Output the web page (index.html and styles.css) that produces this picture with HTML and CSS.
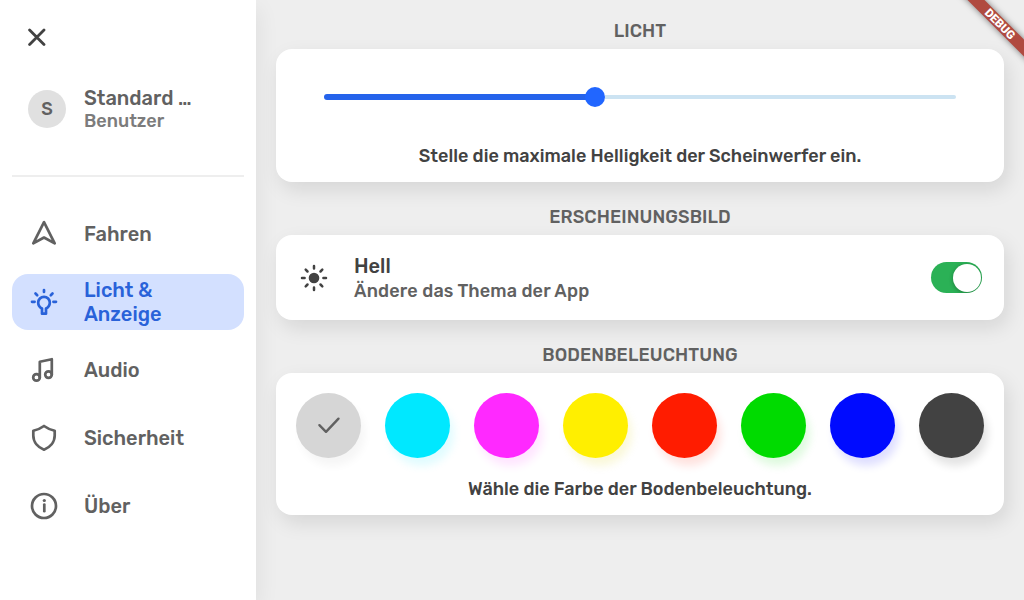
FILE: index.html
```html
<!DOCTYPE html>
<html lang="de">
<head>
<meta charset="utf-8">
<title>Licht &amp; Anzeige</title>
<link rel="stylesheet" href="styles.css">
</head>
<body>
<div class="app">
  <aside class="sidebar">
    <button class="close" aria-label="Schließen">
      <svg width="18" height="18" viewBox="0 0 18 18"><path d="M1.600 2 16 16.400M16 2 1.600 16.400"/></svg>
    </button>
    <div class="profile">
      <span class="avatar">S</span>
      <div>
        <div class="name">Standard …</div>
        <div class="role">Benutzer</div>
      </div>
    </div>
    <hr class="divider">
    <nav class="menu">
      <a class="item">
        <svg class="icon" viewBox="0 0 32 32"><path d="M16 4.200 5.300 25.400 16 19.500l10.700 5.900Z"/></svg>
        <span>Fahren</span>
      </a>
      <a class="item active">
        <svg class="icon" viewBox="0 0 32 32"><path d="M14 27.700v-5.200C11.700 21.500 10.200 19.200 10.200 16.600a5.800 5.800 0 0 1 11.600 0c0 2.600-1.500 4.900-3.800 5.900v5.200ZM16 4v2M7.500 7.500l1.700 1.700M24.500 7.500l-1.700 1.700M4 15.800h2.600M25.400 15.800H28"/></svg>
        <span>Licht &amp;<br>Anzeige</span>
      </a>
      <a class="item">
        <svg class="icon" viewBox="0 0 32 32"><circle cx="8.500" cy="23.400" r="3.300"/><circle cx="20.500" cy="20.600" r="3.300"/><path d="M11.800 23.400V7.700l12-2.500v15.400"/></svg>
        <span>Audio</span>
      </a>
      <a class="item">
        <svg class="icon" viewBox="0 0 32 32"><path d="M16 4C12.700 6.400 9.200 7.900 5.300 8.800v4.800c0 6.500 4.500 11.800 10.700 14.100 6.200-2.300 10.700-7.600 10.700-14.100V8.800C22.800 7.900 19.300 6.400 16 4Z"/></svg>
        <span>Sicherheit</span>
      </a>
      <a class="item">
        <svg class="icon" viewBox="0 0 32 32"><circle cx="16" cy="16" r="12"/><path d="M16.300 14.600v6.600"/><circle class="dot" cx="16.300" cy="10.500" r="1.600"/></svg>
        <span>Über</span>
      </a>
    </nav>
  </aside>
  <main class="content">
    <h2 class="heading">LICHT</h2>
    <section class="card light">
      <div class="slider"><div class="fill"></div><div class="thumb"></div><div class="rest"></div></div>
      <p class="note">Stelle die maximale Helligkeit der Scheinwerfer ein.</p>
    </section>
    <h2 class="heading">ERSCHEINUNGSBILD</h2>
    <section class="card theme">
      <svg class="sun" viewBox="0 0 32 32"><circle cx="16" cy="16" r="5.300"/><path d="M16 4v2.600M16 25.400v2.600M4 16h2.600M25.400 16H28M7.700 7.700l1.800 1.800M22.500 22.500l1.800 1.800M7.700 24.300l1.800-1.800M22.500 9.500l1.800-1.800"/></svg>
      <div class="theme-text">
        <div class="theme-title">Hell</div>
        <div class="theme-sub">Ändere das Thema der App</div>
      </div>
      <span class="switch"><span class="knob"></span></span>
    </section>
    <h2 class="heading">BODENBELEUCHTUNG</h2>
    <section class="card ground">
      <div class="swatches">
        <span class="swatch white"><svg width="24" height="20" viewBox="0 0 24 20"><path d="M2.400 9.200 9 15.800 21.500 2.700"/></svg></span>
        <span class="swatch cyan"></span>
        <span class="swatch magenta"></span>
        <span class="swatch yellow"></span>
        <span class="swatch red"></span>
        <span class="swatch green"></span>
        <span class="swatch blue"></span>
        <span class="swatch dark"></span>
      </div>
      <p class="note">Wähle die Farbe der Bodenbeleuchtung.</p>
    </section>
  </main>
  <div class="ribbon"><span>DEBUG</span></div>
</div>
</body>
</html>
```
FILE: styles.css
```css
* { box-sizing: border-box; }
body { margin: 0; font-family: Rubik, Roboto, "Liberation Sans", sans-serif; font-weight: 500; color: #424242; }
.app { position: relative; display: flex; width: 1024px; height: 600px; overflow: hidden; background: #eee; }

.sidebar { width: 256px; height: 600px; padding: 28px 12px 0; background: #fff; box-shadow: 4px 8px 20px rgba(0, 0, 0, .06); }
.close { display: block; width: 18px; height: 18px; margin-left: 16px; padding: 0; border: 0; background: none; }
.close svg { display: block; fill: none; stroke: #424242; stroke-width: 2.800; stroke-linecap: round; }
.profile { display: flex; align-items: center; gap: 18px; height: 46px; margin: 40px 0 0 16px; }
.avatar { display: flex; align-items: center; justify-content: center; width: 38px; height: 38px; border-radius: 50%; background: #e0e0e0; color: #616161; font-size: 18px; }
.name { font-size: 20px; line-height: 24px; color: #616161; }
.role { font-size: 18px; line-height: 22px; color: #7c7c7c; }
.divider { height: 2px; margin: 43px 0 29px; border: 0; background: #eee; }
.menu { display: flex; flex-direction: column; gap: 12px; }
.item { display: flex; align-items: center; gap: 24px; height: 56px; padding-left: 16px; border-radius: 16px; font-size: 20px; line-height: 24px; color: #616161; }
.item.active { background: #d3e0ff; color: #2962d9; }
.icon, .sun { flex: none; width: 32px; height: 32px; }
.icon { fill: none; stroke: currentColor; stroke-width: 2.700; stroke-linecap: round; stroke-linejoin: round; }
.icon .dot { fill: currentColor; stroke: none; }

.content { flex: 1; padding: 20px 20px 0; }
.heading { height: 29px; margin: 0; font-size: 18px; font-weight: 500; line-height: 22px; letter-spacing: .1px; text-align: center; color: #616161; }
.card { border-radius: 16px; background: #fff; box-shadow: 4px 8px 20px rgba(0, 0, 0, .1); }
.card + .heading { margin-top: 24px; }
.note { margin: 0; font-size: 18px; line-height: 22px; letter-spacing: .03px; text-align: center; }
.light { height: 133px; padding: 38px 48px 0; }
.slider { display: flex; align-items: center; height: 20px; margin-bottom: 38px; }
.fill { width: 262px; height: 6px; margin-right: -1px; border-radius: 3px 0 0 3px; background: #2563eb; }
.thumb { width: 20px; height: 20px; border-radius: 50%; background: #2166ff; }
.rest { flex: 1; height: 4px; border-radius: 0 2px 2px 0; background: #cce3f2; }
.theme { display: flex; align-items: center; height: 85px; padding: 0 22px; }
.sun { fill: #424242; stroke: #424242; stroke-width: 2.500; stroke-linecap: round; }
.sun circle { stroke: none; }
.theme-text { flex: 1; margin-left: 24px; padding-top: 2px; }
.theme-title { font-size: 20px; line-height: 25px; }
.theme-sub { font-size: 18px; line-height: 24px; letter-spacing: .17px; color: #616161; }
.switch { display: flex; align-items: center; justify-content: flex-end; width: 51px; height: 31px; padding: 0 1.500px; border-radius: 16px; background: #2bb156; overflow: hidden; }
.knob { width: 28px; height: 28px; border-radius: 50%; background: #fff; box-shadow: 0 1px 4px rgba(0, 0, 0, .3); }
.ground { height: 142px; padding: 20px 20px 0; }
.swatches { display: flex; justify-content: space-between; margin-bottom: 20px; }
.swatch { display: flex; align-items: center; justify-content: center; width: 65px; height: 65px; border-radius: 50%; background: var(--c); box-shadow: 4px 8px 8px var(--s); }
.swatch svg { fill: none; stroke: #616161; stroke-width: 2.400; stroke-linecap: round; stroke-linejoin: round; }
.white { --c: #d6d6d6; --s: rgba(0, 0, 0, .04); }
.cyan { --c: #00e8ff; --s: rgba(0, 232, 255, .12); }
.magenta { --c: #ff29ff; --s: rgba(255, 41, 255, .12); }
.yellow { --c: #ffef00; --s: rgba(220, 210, 0, .15); }
.red { --c: #ff1c00; --s: rgba(255, 28, 0, .13); }
.green { --c: #00db00; --s: rgba(0, 219, 0, .13); }
.blue { --c: #000bff; --s: rgba(0, 11, 255, .13); }
.dark { --c: #424242; --s: rgba(0, 0, 0, .11); }

.ribbon { position: absolute; top: 18px; right: -46px; display: flex; align-items: center; justify-content: center; width: 140px; height: 12px; transform: rotate(45deg); background: #b04a40; box-shadow: 0 0 6px rgba(0, 0, 0, .5); font: 900 11.700px/12px Roboto, sans-serif; color: #fff; }
```
